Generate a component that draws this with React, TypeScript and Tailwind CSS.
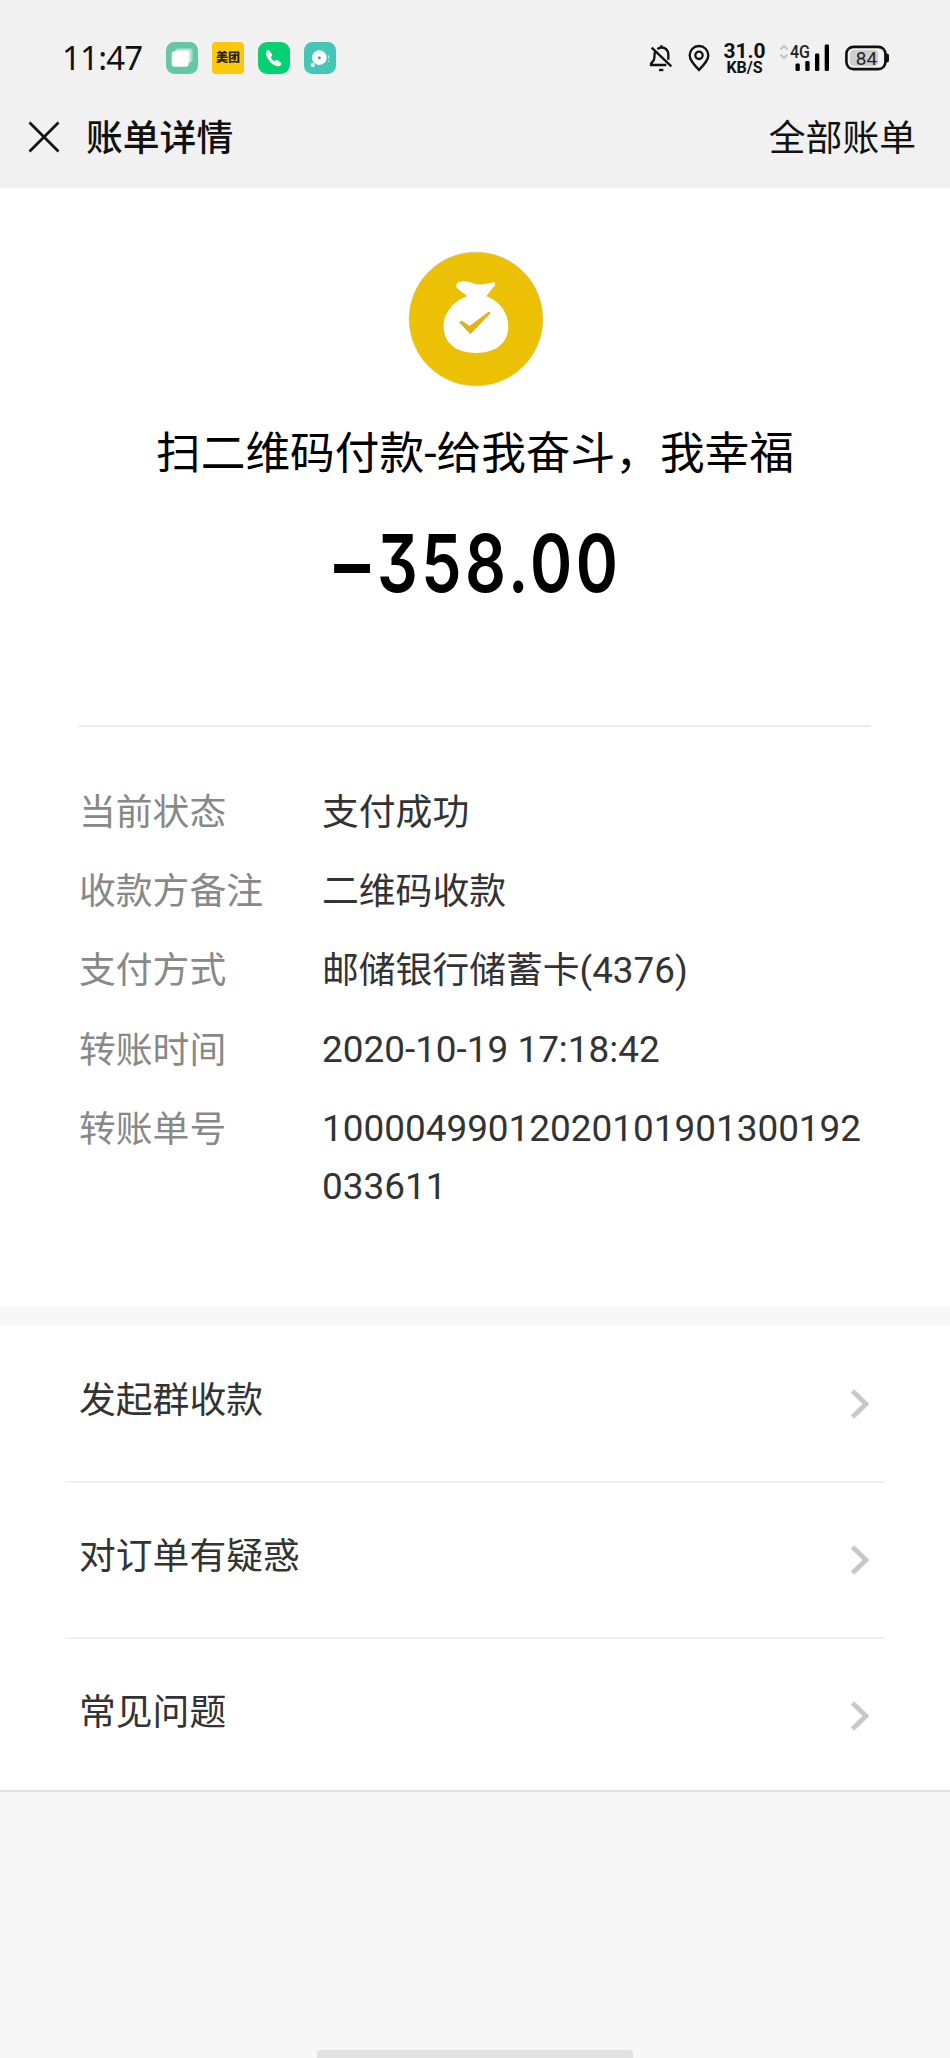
import React from "react";

const details: { label: string; value: string; latin?: boolean }[] = [
  { label: "当前状态", value: "支付成功" },
  { label: "收款方备注", value: "二维码收款" },
  { label: "支付方式", value: "邮储银行储蓄卡(4376)" },
  { label: "转账时间", value: "2020-10-19 17:18:42", latin: true },
  { label: "转账单号", value: "10000499012020101901300192033611", latin: true },
];

const links = ["发起群收款", "对订单有疑惑", "常见问题"];

function CardsIcon() {
  return (
    <svg viewBox="0 0 96 96" className="size-8">
      <rect width="96" height="96" rx="25" fill="#66c7a4" />
      <rect x="29" y="19" width="51" height="41" rx="8" fill="#fff" opacity=".4" />
      <rect x="25" y="23" width="49" height="41" rx="8" fill="#fff" opacity=".5" />
      <rect x="17" y="28" width="51" height="46" rx="8" fill="#fff" />
    </svg>
  );
}

function PhoneIcon() {
  return (
    <svg viewBox="0 0 96 96" className="size-8">
      <rect width="96" height="96" rx="27" fill="#05d172" />
      <path
        d="M25 28c3-4 8-5 10-2l7 11c2 4 0 6-4 9 3 6 7 10 12 12 3-4 5-5 9-3l10 7c3 3 0 8-4 10-6 3-18-1-28-12S21 35 25 28z"
        fill="#fff"
      />
    </svg>
  );
}

function BubbleIcon() {
  return (
    <svg viewBox="0 0 96 96" className="size-8">
      <rect width="96" height="96" rx="25" fill="#44c8b5" />
      <circle cx="46" cy="47" r="22" fill="#fff" />
      <circle cx="46" cy="47" r="4.500" fill="#44a8a0" />
      <circle cx="26" cy="69" r="6" fill="#fff" />
      <path d="M74 40v10M74 56v4" stroke="#fff" strokeWidth="3" opacity=".8" />
    </svg>
  );
}

function BellOffIcon() {
  return (
    <svg viewBox="0 0 72 84" className="ml-px h-7 w-6" fill="none" stroke="#111" strokeWidth="7">
      <path d="M8 11L67 67" />
      <path d="M25 15c19-12 33 2 33 17v15M37 4v6" />
      <path d="M18 24c-3 8 0 18-4 25L6 59v4h46" />
      <path d="M30 78h13" strokeWidth="7" />
    </svg>
  );
}

function PinIcon() {
  return (
    <svg viewBox="0 0 66 84" className="h-7 w-[22px]" fill="none" stroke="#111" strokeWidth="7">
      <path d="M33 78C18 62 5 49 5 34a28 28 0 0 1 56 0c0 15-13 28-28 44z" />
      <circle cx="33" cy="34" r="11" />
    </svg>
  );
}

function SignalIcon() {
  return (
    <svg viewBox="0 0 52 30" className="h-[30px] w-[52px]">
      <path d="M1.500 6.500L5 3l3.500 3.500M1.500 11.500L5 15l3.500-3.500" stroke="#c4c4c4" strokeWidth="2.200" fill="none" />
      <text x="11" y="15" fontSize="17.500" fontWeight="500" textLength="20" lengthAdjust="spacingAndGlyphs" fontFamily="Roboto, sans-serif" fill="#222">
        4G
      </text>
      <g fill="#000">
        <rect x="16.500" y="20.500" width="4.300" height="7.500" rx="1.200" />
        <rect x="26.300" y="18" width="4.300" height="10" rx="1.200" />
        <rect x="36" y="10.500" width="4.300" height="17.500" rx="1.200" />
        <rect x="45.700" y="1.500" width="4.300" height="26.500" rx="1.200" />
      </g>
    </svg>
  );
}

function BatteryIcon() {
  return (
    <svg viewBox="0 0 44 26" className="h-[26px] w-11">
      <rect x="1.400" y="1.900" width="39" height="22.200" rx="7" fill="none" stroke="#111" strokeWidth="2.600" />
      <path d="M41 8.500h1a2 2 0 0 1 2 2v5a2 2 0 0 1-2 2h-1z" fill="#111" />
      <rect x="5" y="5" width="28" height="16" rx="4" fill="#cdcdcd" />
      <text x="21.500" y="19.700" textAnchor="middle" fontSize="19" fontFamily="Roboto, sans-serif" fill="#222">
        84
      </text>
    </svg>
  );
}

function MoneyBagIcon() {
  return (
    <svg viewBox="0 0 408 408" className="ml-[2px] size-[136px]">
      <circle cx="204" cy="204" r="200.500" fill="#ecc004" stroke="#d9c46a" strokeWidth="2" />
      <path
        d="M177 136c-8-10-21-15-29-24-6-7-3-15 5-19 15-6 32 0 47 5 20 6 37-1 56-4 8 0 7 7 3 11-9 11-17 21-24 31 40 14 66 50 66 90 0 54-42 80-97 80s-97-26-97-80c0-40 30-76 70-90z"
        fill="#fff"
      />
      <path d="M155 214l6-4 24 16 58-43 4 3-60 62z" fill="#e3b50c" stroke="#e3b50c" strokeWidth="3" strokeLinejoin="round" />
    </svg>
  );
}

export default function App() {
  return (
    <div className="flex h-[2058px] w-[950px] flex-col overflow-hidden bg-[#f7f7f7] font-['Roboto','Noto_Sans_CJK_SC',sans-serif] text-[36.8px] text-[#333]">
      <header className="h-[188px] shrink-0 bg-[#f1f1f1] text-[#111]">
        <div className="flex h-[116px] items-center justify-between pl-[62px] pr-[61px]">
          <div className="flex items-center">
            <span className="w-[104px] font-['Noto_Sans',sans-serif] text-[33px] leading-[32px] tracking-[-0.8px]">11:47</span>
            <div className="flex items-center gap-[14px]">
              <CardsIcon />
              <div className="flex size-8 items-center justify-center rounded-[4px] bg-[#fdc70c] text-[12px] leading-none font-black text-[#222]">
                美团
              </div>
              <PhoneIcon />
              <BubbleIcon />
            </div>
          </div>
          <div className="flex items-center">
            <BellOffIcon />
            <div className="w-[15px]" />
            <PinIcon />
            <div className="flex w-[69px] flex-col items-center pt-px font-bold">
              <span className="text-[21px] leading-[18px]">31.0</span>
              <span className="text-[16px] leading-[15px]">KB/S</span>
            </div>
            <SignalIcon />
            <div className="w-[14px]" />
            <BatteryIcon />
          </div>
        </div>
        <div className="flex h-[44px] items-center pl-[28px] pr-[34px]">
          <svg viewBox="0 0 32 32" className="mb-[2px] size-8" stroke="#111" strokeWidth="2.800" fill="none">
            <path d="M1.500 1.500l29 29M30.500 1.500l-29 29" />
          </svg>
          <h1 className="ml-[26px] pt-[2px] text-[36.8px] leading-[44px] font-medium">账单详情</h1>
          <span className="ml-auto pt-[2px] leading-[44px]">全部账单</span>
        </div>
      </header>

      <main className="flex h-[1118px] shrink-0 flex-col bg-white px-[79px] pt-[63px]">
        <section className="flex h-[476px] flex-col items-center border-b-2 border-[#ebebeb]">
          <MoneyBagIcon />
          <p className="mt-[37px] text-[44.7px] leading-[60px] whitespace-nowrap text-black">扫二维码付款-给我奋斗，我幸福</p>
          <p className="mt-[39px] flex w-[296px] font-['Inter',sans-serif] text-[80px] leading-[80px] font-semibold whitespace-nowrap text-black [font-feature-settings:'cv09']">
            <span className="w-[50px] shrink-0 origin-left scale-x-[0.93]">−</span>
            <span className="origin-left scale-x-[0.8] tracking-[4.3px]">358.00</span>
          </p>
        </section>
        <dl className="mt-[55px] flex flex-col gap-[21.500px]">
          {details.map((d) => (
            <div key={d.label} className="flex leading-[57.700px]">
              <dt className="-mb-[2px] w-[243px] shrink-0 translate-y-[2px] text-[#888]">{d.label}</dt>
              <dd className={d.latin ? "w-[545px] translate-y-px text-[36.9px] break-all" : "w-[545px] translate-y-[2px]"}>{d.value}</dd>
            </div>
          ))}
        </dl>
      </main>

      <nav className="mt-[19px] h-[467px] shrink-0 overflow-hidden border-b-2 border-[#dfdfdf] bg-white px-[65px] pt-[2px]">
        {links.map((l) => (
          <a key={l} className="flex h-[156px] items-center justify-between border-b-2 border-[#f0f0f0] px-[15px] last:border-transparent">
            <span className="-ml-[1px] pb-[6px]">{l}</span>
            <svg viewBox="0 0 20 30" className="mr-px h-[30px] w-5" fill="none" stroke="#c8c8c8" strokeWidth="4.800">
              <path d="M3.500 2l13.500 13-13.500 13" />
            </svg>
          </a>
        ))}
      </nav>

      <footer className="mt-auto flex justify-center">
        <div className="h-2 w-[316px] rounded-t-[4px] bg-[#e2e2e2]" />
      </footer>
    </div>
  );
}
